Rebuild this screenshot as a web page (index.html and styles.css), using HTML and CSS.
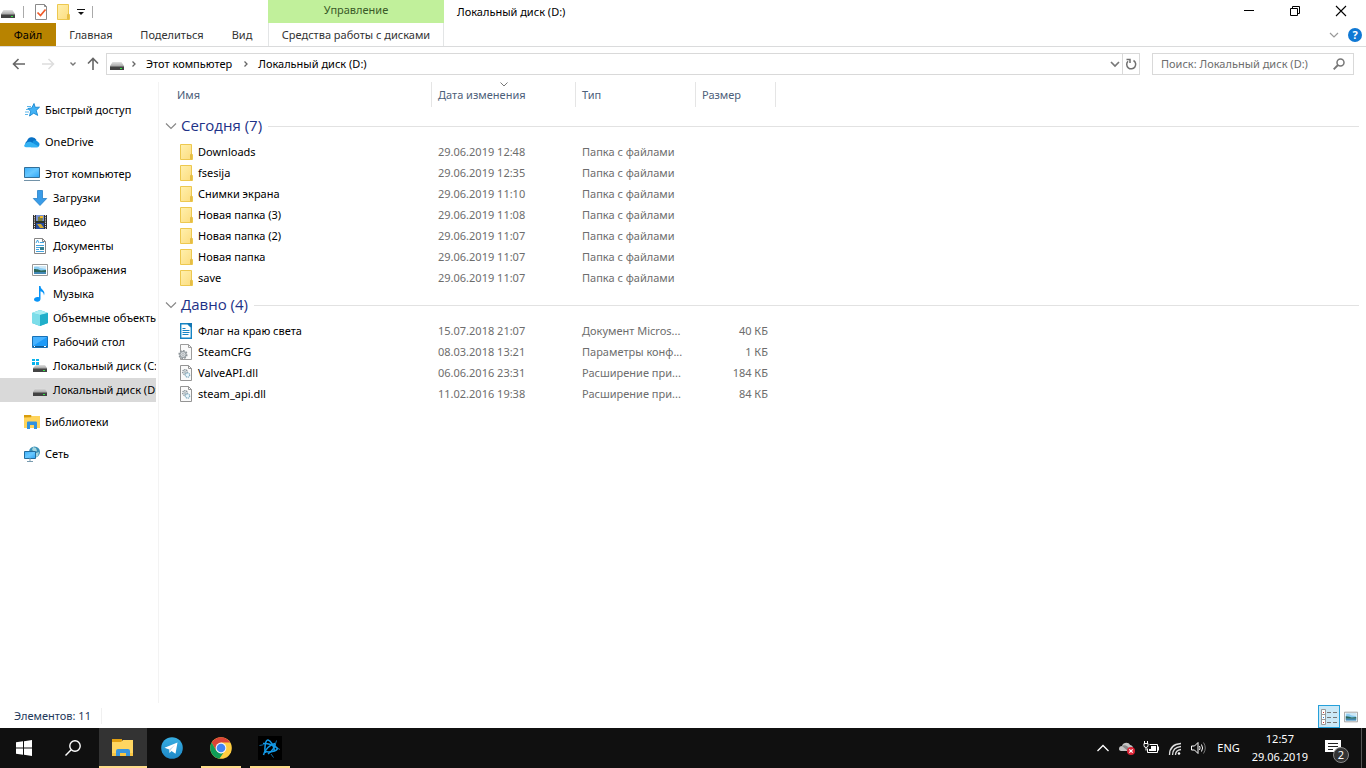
FILE: index.html
```html
<!DOCTYPE html>
<html lang="ru">
<head>
<meta charset="utf-8">
<title>Локальный диск (D:)</title>
<link rel="stylesheet" href="styles.css">
</head>
<body>
<svg class="defs" aria-hidden="true">
  <defs>
    <linearGradient id="gFolder" x1="0" y1="0" x2="1" y2="1"><stop offset="0" stop-color="#fff0ad"/><stop offset="1" stop-color="#fcdc7e"/></linearGradient>
    <linearGradient id="gScreen" x1="0" y1="0" x2="1" y2="1"><stop offset="0" stop-color="#3cb0fc"/><stop offset=".5" stop-color="#68c8ff"/><stop offset="1" stop-color="#2ca4f6"/></linearGradient>
    <linearGradient id="gDisk" x1="0" y1="0" x2="0" y2="1"><stop offset="0" stop-color="#e2e2e2"/><stop offset="1" stop-color="#a9a9a9"/></linearGradient>
    <linearGradient id="gTele" x1="0" y1="0" x2="0" y2="1"><stop offset="0" stop-color="#37aee2"/><stop offset="1" stop-color="#1e88c7"/></linearGradient>
  </defs>
  <symbol id="folder" viewBox="0 0 16 16"><path d="M2.500.5h11v10h1v5h-12z" fill="url(#gFolder)" stroke="#edc84f"/><path d="M12.500 15V10.500l1-1v6z" fill="#f8d775" stroke="#e5bd45"/></symbol>
  <symbol id="disk" viewBox="0 0 16 16"><path d="M3.500 6h9L15 10H1z" fill="url(#gDisk)"/><path d="M1 10h14v4H1z" fill="#424242"/><path d="M1 10h14v1H1z" fill="#777"/><path d="M11 12h2v1h-2z" fill="#31e844"/></symbol>
  <symbol id="sysdisk" viewBox="0 0 16 16"><path d="M0 1h3v2H0zM4 1h3v2H4zM0 4h3v3H0zM4 4h3v3H4z" fill="#09b3ec"/><path d="M4 7h9l2 3H1z" fill="url(#gDisk)"/><path d="M1 10h14v4H1z" fill="#444"/><path d="M1 10h14v1H1z" fill="#777"/><path d="M11 12h2v1h-2z" fill="#31e844"/></symbol>
  <symbol id="star" viewBox="0 0 16 16"><path d="M10 1.500l1.200 3.800 4.300-.1-3.300 3.200 1.500 5-4-2.200L5.500 14l1.200-4.800L3.800 6.500l4-.6z" fill="#43b2f5" stroke="#1787d0" stroke-width=".9"/><path d="M3 4.500h4M2 7.500h3M1 10h4M1 12.500h3" stroke="#49aee8" stroke-width=".9"/></symbol>
  <symbol id="cloud" viewBox="0 0 16 16"><path d="M3 7a5.200 5.200 0 0 1 9.500-1L8 12H2.500A3 3 0 0 1 3 7z" fill="#0871c5"/><path d="M9 7a3.500 3.500 0 0 1 5 1 2.800 2.800 0 0 1-.5 5.200H7z" fill="#1592e0"/><path d="M0 12c1-3 4-5 7-4l7.800 4.500c-.6.600-1 .7-2 .7H3c-1.500 0-2.500-.3-3-1.200z" fill="#35b3f4"/></symbol>
  <symbol id="pc" viewBox="0 0 16 16"><path d="M.5 1.500h15v10H.5z" fill="url(#gScreen)" stroke="#326f99"/><path d="M0 14.500h16" stroke="#7292a8"/></symbol>
  <symbol id="down" viewBox="0 0 16 16"><path d="M5.500.5h5v8h4.200L8 15.500 1.300 8.500h4.200z" fill="#399ce8" stroke="#2680c8" stroke-width=".8"/></symbol>
  <symbol id="video" viewBox="0 0 16 16"><path d="M1 1h14v14H1z" fill="#303030"/><path d="M4 1h8v6H4z" fill="#7691d5"/><path d="M4 9h8v6H4z" fill="#244ca1"/><path d="M6 3l3-1 2 3-1 2H6z" fill="#7c7d3c"/><path d="M8 2h3v2H8z" fill="#f0b728"/><path d="M5 10h4l3 4H8z" fill="#d2a92f"/><path d="M4 7.500h8" stroke="#263a26"/><path d="M2.500 1v14M13.500 1v14" stroke="#e0e0e0" stroke-dasharray="1.200 1"/></symbol>
  <symbol id="document" viewBox="0 0 16 16"><path d="M2.500.5h8l3 3v12h-11z" fill="#fff" stroke="#858585"/><path d="M10.500.5v3h3" fill="none" stroke="#858585"/><path d="M4 5l1.500-3L7 5M8 4.500h4M4 7.500h8M4 9.500h4M4 11.500h3M4 13.500h8" fill="none" stroke="#2c9adb" stroke-width=".9"/><path d="M8 9h4v3H8z" fill="#367f8e"/></symbol>
  <symbol id="picture" viewBox="0 0 16 16"><path d="M.5 2.500h15v11H.5z" fill="#fff" stroke="#999"/><path d="M2 4h12v8H2z" fill="#8accf2"/><path d="M2 5q4-1 6 1l6 1V4H2z" fill="#cfe8f6"/><path d="M2 7c4 0 5 1 7 1.500l5-.5v2H2z" fill="#2c6659"/><path d="M2 10h12v2H2z" fill="#4388b5"/></symbol>
  <symbol id="music" viewBox="0 0 16 16"><path d="M7 0h1.500c0 4 5.500 4 3.500 9.500-.1-2.800-1.700-4-3.500-4.300V13c0 1.600-1.400 2.700-3.200 2.700S2 14.800 2 13.500 3.500 11 5.500 11c.6 0 1 .1 1.500.3z" fill="#0894f7"/></symbol>
  <symbol id="cube" viewBox="0 0 16 16"><path d="M0 3l8-3 8 3v10l-8 3-8-3z" fill="#30bfd6"/><path d="M0 3l8 2v11l-8-3z" fill="#7cdde9"/><path d="M0 3l8-3 8 3-8 2z" fill="#a9edf2"/><path d="M8 5l8-2v10l-8 3z" fill="#20aec9"/></symbol>
  <symbol id="desktop" viewBox="0 0 16 16"><path d="M.5 2.500h15v11H.5z" fill="#1e9bf8" stroke="#1871b6"/><path d="M1 3h14L1 12z" fill="#48b3ff"/><path d="M1 12.500h14" stroke="#135b92"/><path d="M2 12.500h1M12 12.500h2" stroke="#fff"/></symbol>
  <symbol id="library" viewBox="0 0 16 16"><path d="M0 1h7l1 2v3H0z" fill="#d99c0b"/><path d="M0 3.500l7-.2L8 2h8v12H0z" fill="#ffd45b"/><path d="M3 15V8.500Q3 7.500 4 7.500h8q1 0 1 1V15h-3v-4H6v4z" fill="#3192df"/></symbol>
  <symbol id="network" viewBox="0 0 16 16"><circle cx="10.500" cy="6" r="5.500" fill="#3a91b8"/><path d="M9 1l3 1 1 3-2 1-3-2zM12 7l3-1-1 4-2 1z" fill="#a6d6df"/><path d="M.5 5.500h11v7H.5z" fill="url(#gScreen)" stroke="#236d9e"/><path d="M6 12v3M3 15.500h6" stroke="#799baf"/></symbol>
  <symbol id="writer" viewBox="0 0 16 16"><path d="M2.700.7h7l3.600 3.600v11H2.700z" fill="#fff" stroke="#1684c4" stroke-width="1.400"/><path d="M9 0h5v5z" fill="#1376b2"/><path d="M4.500 5.500h3M4.500 7.500h7M4.500 9.500h7M4.500 11.500h6" stroke="#1684c4"/></symbol>
  <symbol id="config" viewBox="0 0 16 16"><path d="M2.500.5h8l3 3v12h-11z" fill="#fafafa" stroke="#9c9c9c"/><path d="M10.500.5v3h3" fill="none" stroke="#9c9c9c"/><circle cx="5" cy="10.500" r="3.800" fill="#c7cdd1" stroke="#8d9499" stroke-width="1.600" stroke-dasharray="1.700 1.200"/><circle cx="5" cy="10.500" r="3" fill="#d8dde0" stroke="#92999d"/><circle cx="5" cy="10.500" r="1" fill="#fff" stroke="#858c90" stroke-width=".6"/></symbol>
  <symbol id="dll" viewBox="0 0 16 16"><path d="M2.500.5h8l3 3v12h-11z" fill="#fafafa" stroke="#949494"/><path d="M10.500.5v3h3" fill="none" stroke="#949494"/><circle cx="7" cy="7" r="2.300" fill="#e7edf0" stroke="#899399" stroke-width="1.400" stroke-dasharray="1.200 .6"/><circle cx="9.500" cy="10" r="2.200" fill="#e8f5fb" stroke="#84acbf" stroke-width="1.300" stroke-dasharray="1.200 .6"/><circle cx="7" cy="7" r=".8" fill="#879197"/></symbol>
  <symbol id="chev" viewBox="0 0 12 12"><path d="M1 3.500l5 5 5-5" fill="none" stroke="currentColor" stroke-width="1.200"/></symbol>
  <symbol id="small-right" viewBox="0 0 8 8"><path d="M2.500 1.500L5 4 2.500 6.500" fill="none" stroke="currentColor" stroke-width="1.300"/></symbol>
</svg>

<main class="window">
  <header class="ribbon">
    <div class="caption">
      <div class="quick">
        <svg class="ic"><use href="#disk"/></svg>
        <span class="bar"></span>
        <button class="plain" aria-label="Свойства"><svg class="ic" viewBox="0 0 16 16"><path d="M2.500.5h9l2 2v13h-11z" fill="#fff" stroke="#8a8a8a"/><path d="M11.500.5v2h2" fill="none" stroke="#8a8a8a"/><path d="M4.500 8.500l3 3 5-6" fill="none" stroke="#f05a28" stroke-width="1.700"/></svg></button>
        <button class="plain" aria-label="Новая папка"><svg class="ic"><use href="#folder"/></svg></button>
        <button class="plain" aria-label="Настройка панели"><svg class="ic-small" viewBox="0 0 8 8"><path d="M0 1.500h8" stroke="#111"/><path d="M1 4h6L4 7z" fill="#111"/></svg></button>
        <span class="bar"></span>
      </div>
      <div class="context">Управление</div>
      <h1 class="title">Локальный диск (D:)</h1>
      <div class="controls">
        <button class="plain" aria-label="Свернуть"><svg class="ic-mid" viewBox="0 0 12 12"><path d="M1 5.500h10" stroke="#000"/></svg></button>
        <button class="plain" aria-label="Восстановить"><svg class="ic-mid" viewBox="0 0 12 12"><path d="M1.500 3.500h7v7h-7zM3.500 3.500v-2h7v7h-2" fill="none" stroke="#000"/></svg></button>
        <button class="plain" aria-label="Закрыть"><svg class="ic-mid" viewBox="0 0 12 12"><path d="M1 1l10 10M11 1L1 11" stroke="#000" stroke-width="1.100"/></svg></button>
      </div>
    </div>
    <nav class="tabs">
      <button class="tab tab-file">Файл</button>
      <button class="tab tab-home">Главная</button>
      <button class="tab tab-share">Поделиться</button>
      <button class="tab tab-view">Вид</button>
      <button class="tab tab-tools">Средства работы с дисками</button>
      <div class="help">
        <button class="plain" aria-label="Развернуть ленту"><svg class="ic-mid" viewBox="0 0 12 12"><path d="M2 4l4 4 4-4" fill="none" stroke="#999" stroke-width="1.200"/></svg></button>
        <button class="help-button" aria-label="Справка">?</button>
      </div>
    </nav>
  </header>

  <div class="address-row">
    <div class="history">
      <button class="plain" aria-label="Назад"><svg class="ic" viewBox="0 0 16 16"><path d="M14 8H3M7.500 3L2.500 8l5 5" fill="none" stroke="#666" stroke-width="1.600"/></svg></button>
      <button class="plain" aria-label="Вперёд"><svg class="ic" viewBox="0 0 16 16"><path d="M2 8h11M8.500 3l5 5-5 5" fill="none" stroke="#ddd" stroke-width="1.500"/></svg></button>
      <button class="plain" aria-label="Последние"><svg class="ic-small" viewBox="0 0 8 8"><path d="M1.500 2.500L4 5l2.500-2.500" fill="none" stroke="#777" stroke-width="1.400"/></svg></button>
      <button class="plain" aria-label="Вверх"><svg class="ic" viewBox="0 0 16 16"><path d="M8 14V3M3 7.500l5-5 5 5" fill="none" stroke="#666" stroke-width="1.600"/></svg></button>
    </div>
    <div class="address">
      <svg class="ic"><use href="#disk"/></svg>
      <svg class="ic-small crumb-sep"><use href="#small-right"/></svg>
      <button class="plain crumb">Этот компьютер</button>
      <svg class="ic-small crumb-sep"><use href="#small-right"/></svg>
      <button class="plain crumb">Локальный диск (D:)</button>
      <button class="plain drop" aria-label="Предыдущие адреса"><svg class="ic-mid" viewBox="0 0 12 12"><path d="M2 4l4 4 4-4" fill="none" stroke="#777" stroke-width="1.700"/></svg></button>
      <button class="plain refresh" aria-label="Обновить"><svg class="ic-mid" viewBox="0 0 12 12"><path d="M8.500 2.500A4.500 4.500 0 1 1 3 3.200M1.500 1.500h3.500V5" fill="none" stroke="#707070" stroke-width="1.500"/></svg></button>
    </div>
    <label class="search">
      <input type="search" placeholder="Поиск: Локальный диск (D:)" aria-label="Поиск">
      <svg class="ic-mid" viewBox="0 0 12 12"><circle cx="7.500" cy="4.500" r="3.500" fill="none" stroke="#777" stroke-width="1.500"/><path d="M5 7L.7 11.300" stroke="#777" stroke-width="1.900"/></svg>
    </label>
  </div>

  <div class="content">
    <nav class="tree" aria-label="Область навигации">
      <a class="node root" href="#"><svg class="ic"><use href="#star"/></svg><span>Быстрый доступ</span></a>
      <a class="node root" href="#"><svg class="ic"><use href="#cloud"/></svg><span>OneDrive</span></a>
      <a class="node root" href="#"><svg class="ic"><use href="#pc"/></svg><span>Этот компьютер</span></a>
      <a class="node" href="#"><svg class="ic"><use href="#down"/></svg><span>Загрузки</span></a>
      <a class="node" href="#"><svg class="ic"><use href="#video"/></svg><span>Видео</span></a>
      <a class="node" href="#"><svg class="ic"><use href="#document"/></svg><span>Документы</span></a>
      <a class="node" href="#"><svg class="ic"><use href="#picture"/></svg><span>Изображения</span></a>
      <a class="node" href="#"><svg class="ic"><use href="#music"/></svg><span>Музыка</span></a>
      <a class="node" href="#"><svg class="ic"><use href="#cube"/></svg><span>Объемные объекты</span></a>
      <a class="node" href="#"><svg class="ic"><use href="#desktop"/></svg><span>Рабочий стол</span></a>
      <a class="node" href="#"><svg class="ic"><use href="#sysdisk"/></svg><span>Локальный диск (C:)</span></a>
      <a class="node selected" href="#"><svg class="ic"><use href="#disk"/></svg><span>Локальный диск (D:)</span></a>
      <a class="node root" href="#"><svg class="ic"><use href="#library"/></svg><span>Библиотеки</span></a>
      <a class="node root" href="#"><svg class="ic"><use href="#network"/></svg><span>Сеть</span></a>
    </nav>
    <section class="files">
      <table>
        <colgroup><col class="c-name"><col class="c-date"><col class="c-type"><col class="c-size"><col></colgroup>
        <thead><tr><th>Имя</th><th><svg class="sort" viewBox="0 0 8 5"><path d="M.5.5L4 4 7.500.5" fill="none" stroke="#777"/></svg>Дата изменения</th><th>Тип</th><th>Размер</th><th></th></tr></thead>
        <tbody>
          <tr class="group"><th colspan="5"><div><svg class="ic-mid grey"><use href="#chev"/></svg><span>Сегодня (7)</span></div></th></tr>
          <tr><td><div><svg class="ic"><use href="#folder"/></svg>Downloads</div></td><td>29.06.2019 12:48</td><td>Папка с файлами</td><td></td><td></td></tr>
          <tr><td><div><svg class="ic"><use href="#folder"/></svg>fsesija</div></td><td>29.06.2019 12:35</td><td>Папка с файлами</td><td></td><td></td></tr>
          <tr><td><div><svg class="ic"><use href="#folder"/></svg>Снимки экрана</div></td><td>29.06.2019 11:10</td><td>Папка с файлами</td><td></td><td></td></tr>
          <tr><td><div><svg class="ic"><use href="#folder"/></svg>Новая папка (3)</div></td><td>29.06.2019 11:08</td><td>Папка с файлами</td><td></td><td></td></tr>
          <tr><td><div><svg class="ic"><use href="#folder"/></svg>Новая папка (2)</div></td><td>29.06.2019 11:07</td><td>Папка с файлами</td><td></td><td></td></tr>
          <tr><td><div><svg class="ic"><use href="#folder"/></svg>Новая папка</div></td><td>29.06.2019 11:07</td><td>Папка с файлами</td><td></td><td></td></tr>
          <tr><td><div><svg class="ic"><use href="#folder"/></svg>save</div></td><td>29.06.2019 11:07</td><td>Папка с файлами</td><td></td><td></td></tr>
        </tbody>
        <tbody>
          <tr class="group"><th colspan="5"><div><svg class="ic-mid grey"><use href="#chev"/></svg><span>Давно (4)</span></div></th></tr>
          <tr><td><div><svg class="ic"><use href="#writer"/></svg>Флаг на краю света</div></td><td>15.07.2018 21:07</td><td>Документ Micros...</td><td>40 КБ</td><td></td></tr>
          <tr><td><div><svg class="ic"><use href="#config"/></svg>SteamCFG</div></td><td>08.03.2018 13:21</td><td>Параметры конф...</td><td>1 КБ</td><td></td></tr>
          <tr><td><div><svg class="ic"><use href="#dll"/></svg>ValveAPI.dll</div></td><td>06.06.2016 23:31</td><td>Расширение при...</td><td>184 КБ</td><td></td></tr>
          <tr><td><div><svg class="ic"><use href="#dll"/></svg>steam_api.dll</div></td><td>11.02.2016 19:38</td><td>Расширение при...</td><td>84 КБ</td><td></td></tr>
        </tbody>
      </table>
    </section>
  </div>

  <footer class="status">
    <span class="count">Элементов: 11</span>
    <div class="views">
      <button class="view active" aria-label="Таблица"><svg class="ic" viewBox="0 0 16 16"><path d="M.5.500h4v15h-4zM.5 5.500h4M.5 10.500h4" fill="#fff" stroke="#999"/><path d="M6 3.500h4M12 3.500h4M6 8.500h4M12 8.500h4M6 13.500h4M12 13.500h4" stroke="#777"/><path d="M2 3h1v1H2zM2 13h1v1H2z" fill="#d13b31"/><path d="M2 8h1v1H2z" fill="#2782e0"/></svg></button>
      <button class="view" aria-label="Крупные значки"><svg class="ic-view" viewBox="0 0 16 16"><use href="#picture"/></svg></button>
    </div>
  </footer>
</main>

<footer class="taskbar">
  <div class="apps">
    <button class="app" aria-label="Пуск"><svg class="ic" viewBox="0 0 16 16"><path d="M0 2.300l7-1v6.200H0zM8 1.200L16 0v7.500H8zM0 8.500h7v6.200l-7-1zM8 8.500h8V16l-8-1.200z" fill="#fff"/></svg></button>
    <button class="app find" aria-label="Поиск"><svg class="ic" viewBox="0 0 16 16"><circle cx="10" cy="6" r="5.200" fill="none" stroke="#fff" stroke-width="1.400"/><path d="M6.200 9.800L.5 15.500" stroke="#fff" stroke-width="1.400"/></svg></button>
    <button class="app current open" aria-label="Проводник"><svg class="ic-app" viewBox="0 0 24 24"><path d="M1 3h10v5H1z" fill="#e2a012"/><path d="M1 6h9l2-2h10v16H1z" fill="#ffd661"/><path d="M1 17h21v3H1z" fill="#f9c643"/><path d="M5 20v-5q0-2 2-2h10q2 0 2 2v5h-4v-3H9v3z" fill="#3a96dd"/></svg></button>
    <button class="app" aria-label="Telegram"><svg class="ic-app" viewBox="0 0 24 24"><circle cx="12" cy="12" r="10.800" fill="url(#gTele)"/><path d="M4.500 11.800L17.500 6.500l-2 11.200-4-2.800-2 2-.3-3.400z" fill="#fff"/><path d="M9.200 13.500l6-5-4.500 5.600-1.200 2.600z" fill="#bfd9ea"/></svg></button>
    <button class="app open" aria-label="Chrome"><svg class="ic-app" viewBox="0 0 24 24"><circle cx="12" cy="12" r="10.800" fill="#ffcd40"/><path d="M2.650 6.600A10.800 10.800 0 0 1 21.350 6.600H12l-4.700 8.100z" fill="#db4437"/><path d="M2.650 6.600L7.300 14.700 12 17.400l2.500-.7-4.100 6A10.800 10.800 0 0 1 2.650 6.600z" fill="#0f9d58"/><circle cx="12" cy="12" r="5.400" fill="#f5f5f5"/><circle cx="12" cy="12" r="4.300" fill="#4285f4"/></svg></button>
    <button class="app open" aria-label="Battle.net"><svg class="ic-app" viewBox="0 0 24 24"><path d="M0 0h24v24H0z" fill="#000"/><g fill="none" stroke="#1499e6" stroke-width="1.500"><path d="M7.500 17C6 12 7.500 3.500 10 4c2.500.5 5.500 5 6.500 11"/><path d="M5 7.500c4-.5 12 1.500 14.500 5-1 3-8 4-12.500 3"/><path d="M5.500 19c1-5 7-11 11.500-11.500 1 2-2.500 7.500-7 10.500"/></g><path d="M1.500 9.500l4-.8M17.500 8l1-3.500M13 18l2.500 3.500M20 12.500l2 1" stroke="#0f6ea8" fill="none"/></svg></button>
  </div>
  <div class="tray">
    <button class="plain" aria-label="Скрытые значки"><svg class="ic" viewBox="0 0 16 16"><path d="M2.500 11L8 5.500l5.500 5.500" fill="none" stroke="#fff" stroke-width="1.300"/></svg></button>
    <button class="plain" aria-label="OneDrive"><svg class="ic" viewBox="0 0 16 16"><path d="M0 9c0-2 1-3 3-3 1-4 7-4 8-1 3 0 4 4 2 6H2c-1 0-2-1-2-2z" fill="#c3c3c3"/><path d="M3 6c3-2 6 0 8 4l-2 1z" fill="#888"/><circle cx="12" cy="11" r="4" fill="#dc2436"/><path d="M10.300 9.300l3.400 3.400M13.700 9.300l-3.400 3.400" stroke="#fff" stroke-width="1.200"/></svg></button>
    <button class="plain" aria-label="Батарея"><svg class="ic" viewBox="0 0 16 16"><path d="M6.500 4.500h8v8h-10v-4" fill="none" stroke="#fff"/><path d="M8 6h5v5H6V9h2z" fill="#fff"/><path d="M15.500 6.500v4M1 3.500h4v2q0 2-2 2t-2-2zM1.500 1v2M4.500 1v2M3 7.500v3" fill="none" stroke="#fff"/></svg></button>
    <button class="plain wifi" aria-label="Сеть"><svg class="ic" viewBox="0 0 16 16"><path d="M2.500 15C2.500 8 7 4 14 3.500M5.500 15c0-5 3.500-8 8.500-8.500M8.500 15c0-3 2-5 5.500-5.500" fill="none" stroke="#ddd" stroke-width="1.300"/><circle cx="12" cy="13.500" r="1.300" fill="#fff"/></svg></button>
    <button class="plain" aria-label="Громкость"><svg class="ic" viewBox="0 0 16 16"><path d="M.5 6h3L7 2.500v11L3.500 10h-3z" fill="none" stroke="#fff"/><path d="M8.500 6q1.200 2 0 4M10.500 4.500q2.200 3.500 0 7" fill="none" stroke="#fff"/><path d="M12.500 2.500q3.500 5.500 0 11" fill="none" stroke="#777"/></svg></button>
    <button class="plain lang">ENG</button>
    <button class="plain clock"><span>12:57</span><span>29.06.2019</span></button>
    <button class="plain notes" aria-label="Уведомления"><svg class="ic" viewBox="0 0 16 16"><path d="M0 0h16v12h-3v4l-4-4H0z" fill="#fff"/><path d="M3 3.500h10M3 6.500h10M3 9.500h5" stroke="#222"/></svg><span class="badge">2</span></button>
    <span class="peek"></span>
  </div>
</footer>
</body>
</html>
```
FILE: styles.css
```css
* { box-sizing: border-box; }

body {
  margin: 0;
  min-height: 100vh;
  display: flex;
  flex-direction: column;
  background: #fff;
  color: #000;
  font: 11px/16px "Noto Sans", "Open Sans", sans-serif;
}

.defs { position: absolute; width: 0; height: 0; }
svg { flex: none; }
.ic { width: 16px; height: 16px; display: block; }
.ic-mid { width: 12px; height: 12px; display: block; }
.ic-small { width: 8px; height: 8px; display: block; }
.ic-app { width: 24px; height: 24px; display: block; }
.ic-view { width: 14px; height: 14px; display: block; }
.grey { color: #888; }

button {
  font: inherit;
  color: inherit;
  border: 0;
  padding: 0;
  background: none;
  display: flex;
  align-items: center;
  justify-content: center;
  white-space: nowrap;
}
.plain { flex: none; }

.window { flex: 1; display: flex; flex-direction: column; }

/* Ribbon */
.ribbon { border-bottom: 1px solid #dadbdc; }
.caption { display: flex; height: 23px; }
.quick { width: 268px; display: flex; align-items: center; gap: 7px; padding-top: 1px; }
.quick .bar { width: 1px; height: 12px; background: #aaa; }
.quick .bar + button { margin-left: 2px; }
.quick button + button { margin-left: -1px; }
.context {
  width: 176px;
  padding-top: 2px;
  text-align: center;
  background: #c1f09b;
  color: #3a5a28;
}
.title { flex: 1; margin: 0; padding: 4px 0 0 13px; font-size: 11px; font-weight: 400; }
.controls { display: flex; align-items: flex-start; padding-right: 2px; }
.controls button { width: 46px; height: 21px; }
.tabs { display: flex; height: 23px; color: #333; }
.tab-file { width: 56px; background: #b88300; color: #000; }
.tab-home { width: 70px; }
.tab-share { width: 92px; }
.tab-view { width: 48px; margin-right: 2px; }
.tab-tools { width: 176px; border: solid #e3e5e6; border-width: 0 1px; }
.help { margin-left: auto; display: flex; align-items: center; gap: 8px; padding-right: 4px; }
.help-button {
  width: 14px;
  height: 14px;
  border-radius: 50%;
  background: #0f78d4;
  color: #fff;
  font-weight: 700;
}

/* Address bar */
.address-row { display: flex; align-items: flex-start; height: 35px; padding: 6px 12px 0 0; }
.history { display: flex; align-items: center; width: 106px; height: 22px; padding-left: 11px; gap: 13px; }
.history button:nth-child(3) { margin-right: -5px; }
.address { flex: 1; height: 22px; display: flex; align-items: center; border: 1px solid #d9d9d9; padding-left: 2px; }
.crumb-sep { color: #666; margin: 0 8px 0 5px; }
.crumb + .crumb-sep { margin-left: 10px; }
.drop { margin-left: auto; width: 14px; height: 20px; }
.refresh { width: 17px; height: 20px; border-left: 1px solid #d9d9d9; }
.search { width: 202px; height: 22px; margin-left: 12px; padding: 0 8px; display: flex; align-items: center; border: 1px solid #d9d9d9; }
.search input {
  flex: 1;
  min-width: 0;
  border: 0;
  padding: 0;
  font: inherit;
  background: none;
  outline: none;
}
.search input::placeholder { color: #6d6d6d; opacity: 1; }

/* Navigation tree */
.content { flex: 1; display: flex; }
.tree { width: 159px; flex: none; border-right: 1px solid #f3f3f3; padding: 8px 2px 8px 0; overflow: hidden; }
.node {
  display: flex;
  align-items: center;
  gap: 5px;
  height: 24px;
  padding-left: 32px;
  overflow: hidden;
  color: #000;
  text-decoration: none;
  white-space: nowrap;
}
.root { margin-top: 8px; padding-left: 24px; }
.selected { background: #d9d9d9; }

/* File table */
.files { flex: 1; min-width: 0; padding-right: 7px; }
table { width: 100%; table-layout: fixed; border-collapse: separate; border-spacing: 0; }
.c-name { width: 273px; }
.c-date { width: 144px; }
.c-type { width: 120px; }
.c-size { width: 80px; }
th, td { padding: 0 0 0 6px; text-align: left; font-weight: 400; white-space: nowrap; }
thead th { height: 25px; border-right: 1px solid #e5e5e5; color: #4c607a; position: relative; }
thead th:first-child { padding-left: 18px; }
thead th:last-child { border: 0; }
.sort { position: absolute; top: 0; left: 68px; width: 8px; height: 5px; }
td { height: 21px; color: #6d6d6d; }
td:first-child { color: #000; padding-left: 19px; }
td:first-child div { display: flex; align-items: center; gap: 4px; }
td:nth-child(4) { text-align: right; padding-right: 8px; }
.group th { height: 32px; padding: 2px 0 0 6px; }
.group div { display: flex; align-items: center; gap: 4px; font: 15px/20px "Open Sans", sans-serif; color: #1e3287; }
.group span { padding-bottom: 2px; }
.group div::after { content: ""; flex: 1; height: 1px; margin-left: 2px; background: #e2e2e2; }
tbody:first-of-type .group th { height: 34px; padding-top: 4px; }

/* Status bar */
.status { display: flex; align-items: center; height: 25px; padding: 0 4px 0 14px; color: #1e395b; }
.count { padding-right: 10px; border-right: 1px solid #f0f0f0; }
.views { margin-left: auto; display: flex; padding-top: 2px; }
.view { width: 22px; height: 23px; border: 1px solid transparent; }
.active { border-color: #26a0da; background: #cbe8f6; }

/* Taskbar */
.taskbar { display: flex; justify-content: space-between; height: 40px; background: #101010; color: #fff; }
.apps { display: flex; gap: 1px; }
.app { width: 48px; height: 40px; border: solid transparent; border-width: 0 4px; }
.find { margin-right: 1px; }
.open { background: linear-gradient(#fedc8b, #fedc8b) bottom / 100% 2px no-repeat padding-box; }
.current { border-width: 0; background: linear-gradient(#fedc8b, #fedc8b) bottom / 100% 2px no-repeat #333; }
.tray { display: flex; align-items: center; gap: 8px; }
.lang { padding-left: 2px; }
.clock { flex-direction: column; padding: 0 1px 0 4px; line-height: 18px; }
.notes { position: relative; width: 32px; height: 40px; margin-right: 4px; }
.badge {
  position: absolute;
  left: 16px;
  top: 19px;
  width: 16px;
  height: 16px;
  border: 1px solid #888;
  border-radius: 50%;
  background: #333;
  line-height: 14px;
}
.peek { width: 5px; height: 40px; border-left: 1px solid #555; }
```
